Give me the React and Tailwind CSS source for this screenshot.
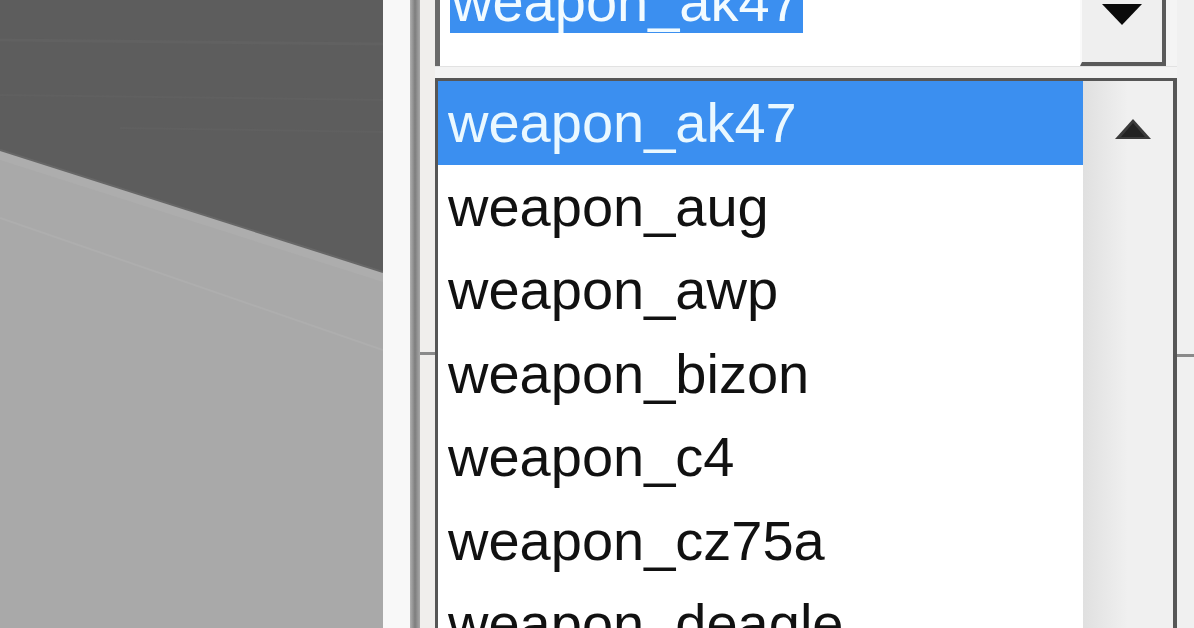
import React from "react";

const items = [
  "weapon_ak47",
  "weapon_aug",
  "weapon_awp",
  "weapon_bizon",
  "weapon_c4",
  "weapon_cz75a",
  "weapon_deagle",
];

function GameView() {
  return (
    <svg width="383" height="628" viewBox="0 0 383 628" className="block">
      <rect x="0" y="0" width="383" height="628" fill="#5d5d5d" />
      <line x1="0" y1="40" x2="383" y2="44" stroke="#616161" strokeWidth="3" />
      <line x1="0" y1="95" x2="383" y2="100" stroke="#606060" strokeWidth="2" />
      <line x1="120" y1="128" x2="383" y2="132" stroke="#606060" strokeWidth="2" />
      <polygon points="0,150 383,272 383,628 0,628" fill="#a9a9a9" />
      <polygon points="0,150 383,272 383,282 0,160" fill="#adadad" />
      <line x1="0" y1="218" x2="383" y2="350" stroke="#aeaeae" strokeWidth="2" />
      <line x1="0" y1="150" x2="383" y2="272" stroke="#676767" strokeWidth="2" />
    </svg>
  );
}

export default function App() {
  const font = { fontFamily: '"Liberation Sans", Arial, sans-serif' };
  return (
    <div
      className="w-[1194px] h-[628px] flex overflow-hidden bg-[#f2f2f2]"
      style={font}
    >
      <div className="w-[383px] h-full shrink-0">
        <GameView />
      </div>
      <div className="w-[27px] h-full shrink-0 bg-[#f8f8f8]" />
      <div className="w-[10px] h-full shrink-0 bg-gradient-to-r from-[#b0b0b0] via-[#7e7e7e] to-[#a8a8a8]" />
      <div className="w-[15px] h-full shrink-0 bg-[#f0eeec] flex flex-col">
        <div className="h-[352px] shrink-0" />
        <div className="h-[3px] shrink-0 bg-[#8a8a8a]" />
      </div>

      <div className="w-[742px] h-full shrink-0 flex flex-col">
        {/* combo box */}
        <div className="h-[66px] shrink-0 flex">
          <div className="w-[5px] h-full bg-[#6a6a6a]" />
          <div className="flex-1 h-full bg-white overflow-hidden pl-[10px]">
            <div className="inline-block -mt-[29px] h-[62px] leading-[62px] text-[56px] bg-[#3b8ff0] text-[#f2fbff] px-[2px] align-top">
              weapon_ak47
            </div>
          </div>
          <div className="w-[86px] h-full bg-[#efefef] border-r-[4px] border-b-[4px] border-[#5a5a5a] border-l-[2px] border-l-[#fafafa] flex justify-center">
            <svg width="40" height="24" viewBox="0 0 40 24" className="mt-[4px]">
              <polygon points="0,0 40,0 20,21" fill="#0a0a0a" />
            </svg>
          </div>
          <div className="w-[11px] h-full bg-[#f4f4f4]" />
        </div>
        <div className="h-[12px] shrink-0 bg-[#f3f3f3] border-t border-[#e2e2e2]" />

        {/* dropdown list */}
        <div className="flex-1 flex border-l-[3px] border-t-[3px] border-r-[4px] border-[#565656] bg-white">
          <div className="w-[645px] shrink-0 flex flex-col">
            {items.map((it, i) => (
              <div
                key={it}
                className={
                  "h-[83.5px] shrink-0 leading-[83.5px] text-[56px] pl-[10px] whitespace-nowrap " +
                  (i === 0
                    ? "bg-[#3b8ff0] text-[#eaf8ff]"
                    : "bg-white text-[#111111]")
                }
              >
                {it}
              </div>
            ))}
          </div>
          <div className="flex-1 bg-gradient-to-r from-[#e0e0e0] via-[#f0f0f0] to-[#f0f0f0] flex justify-center">
            <svg width="38" height="24" viewBox="0 0 38 24" className="mt-[36px] ml-[10px]">
              <polygon points="19,2 37,22 1,22" fill="#3a3a3a" />
              <polygon points="19,6 31,20 7,20" fill="#222222" />
            </svg>
          </div>
        </div>
      </div>

      <div className="flex-1 h-full bg-[#f0f0f0] flex flex-col">
        <div className="h-[354px] shrink-0" />
        <div className="h-[3px] shrink-0 bg-[#8a8a8a]" />
      </div>
    </div>
  );
}
